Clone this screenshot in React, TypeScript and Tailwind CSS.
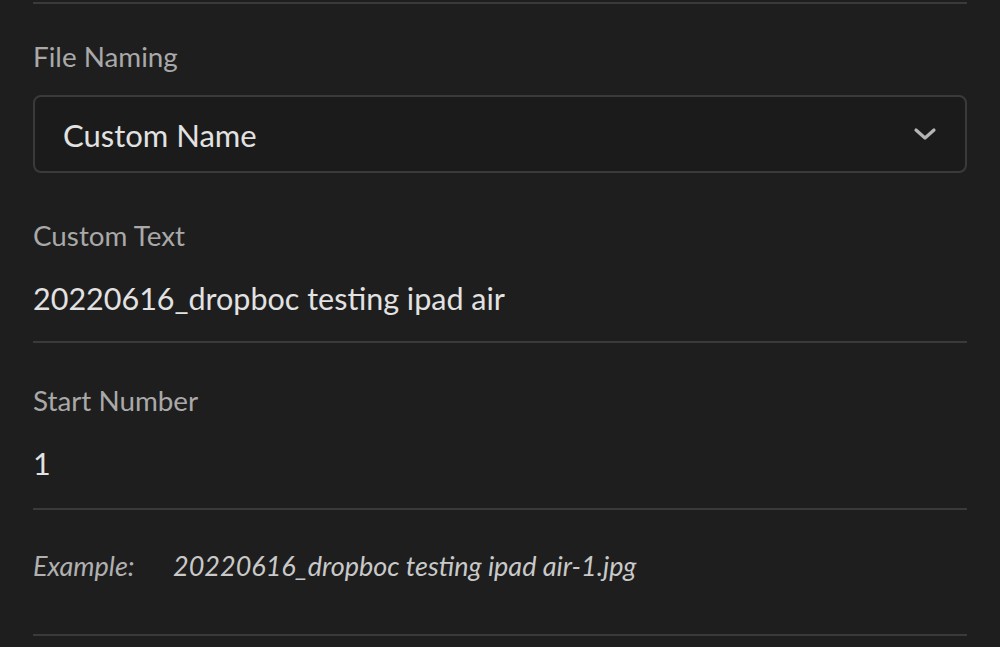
import React from "react";

export default function App() {
  const font = { fontFamily: '"Lato", "Open Sans", sans-serif' };
  return (
    <div className="w-[1000px] h-[647px] bg-[#1e1e1e] overflow-hidden" style={font}>
      <div className="mx-[33px] flex flex-col">
        <div className="h-[2px] mt-[2px] bg-[#3a3a3a]" />
        <div className="mt-[37px] text-[27.8px] leading-[32px] text-[#a9a9a9]">File Naming</div>
        <div className="mt-[22px] h-[78px] rounded-[8px] border-2 border-[#3a3a3a] bg-[#1b1b1b] flex items-center justify-between pl-[28px] pr-[28px]">
          <span className="text-[31px] leading-[40px] pt-[2px] text-[#e2e2e2]">Custom Name</span>
          <svg width="24" height="16" viewBox="0 0 24 16" fill="none">
            <path d="M3 4 L12 12 L21 4" stroke="#b5b5b5" strokeWidth="3.2" strokeLinecap="round" strokeLinejoin="round" />
          </svg>
        </div>
        <div className="mt-[47px] text-[27.8px] leading-[32px] text-[#a9a9a9]">Custom Text</div>
        <div className="mt-[26px] text-[30.5px] leading-[40px] text-[#e2e2e2]">20220616_dropboc testing ipad air</div>
        <div className="mt-[23px] h-[2px] bg-[#3a3a3a]" />
        <div className="mt-[42px] text-[27.8px] leading-[32px] text-[#a9a9a9]">Start Number</div>
        <div className="mt-[26px] text-[30.5px] leading-[40px] text-[#e2e2e2]">1</div>
        <div className="mt-[25px] h-[2px] bg-[#3a3a3a]" />
        <div className="mt-[40px] flex italic text-[27px] leading-[32px] text-[#c9c9c9]">
          <span className="w-[140px] text-[#b0b0b0]">Example:</span>
          <span>20220616_dropboc testing ipad air-1.jpg</span>
        </div>
        <div className="mt-[52px] h-[2px] bg-[#3a3a3a]" />
      </div>
    </div>
  );
}
